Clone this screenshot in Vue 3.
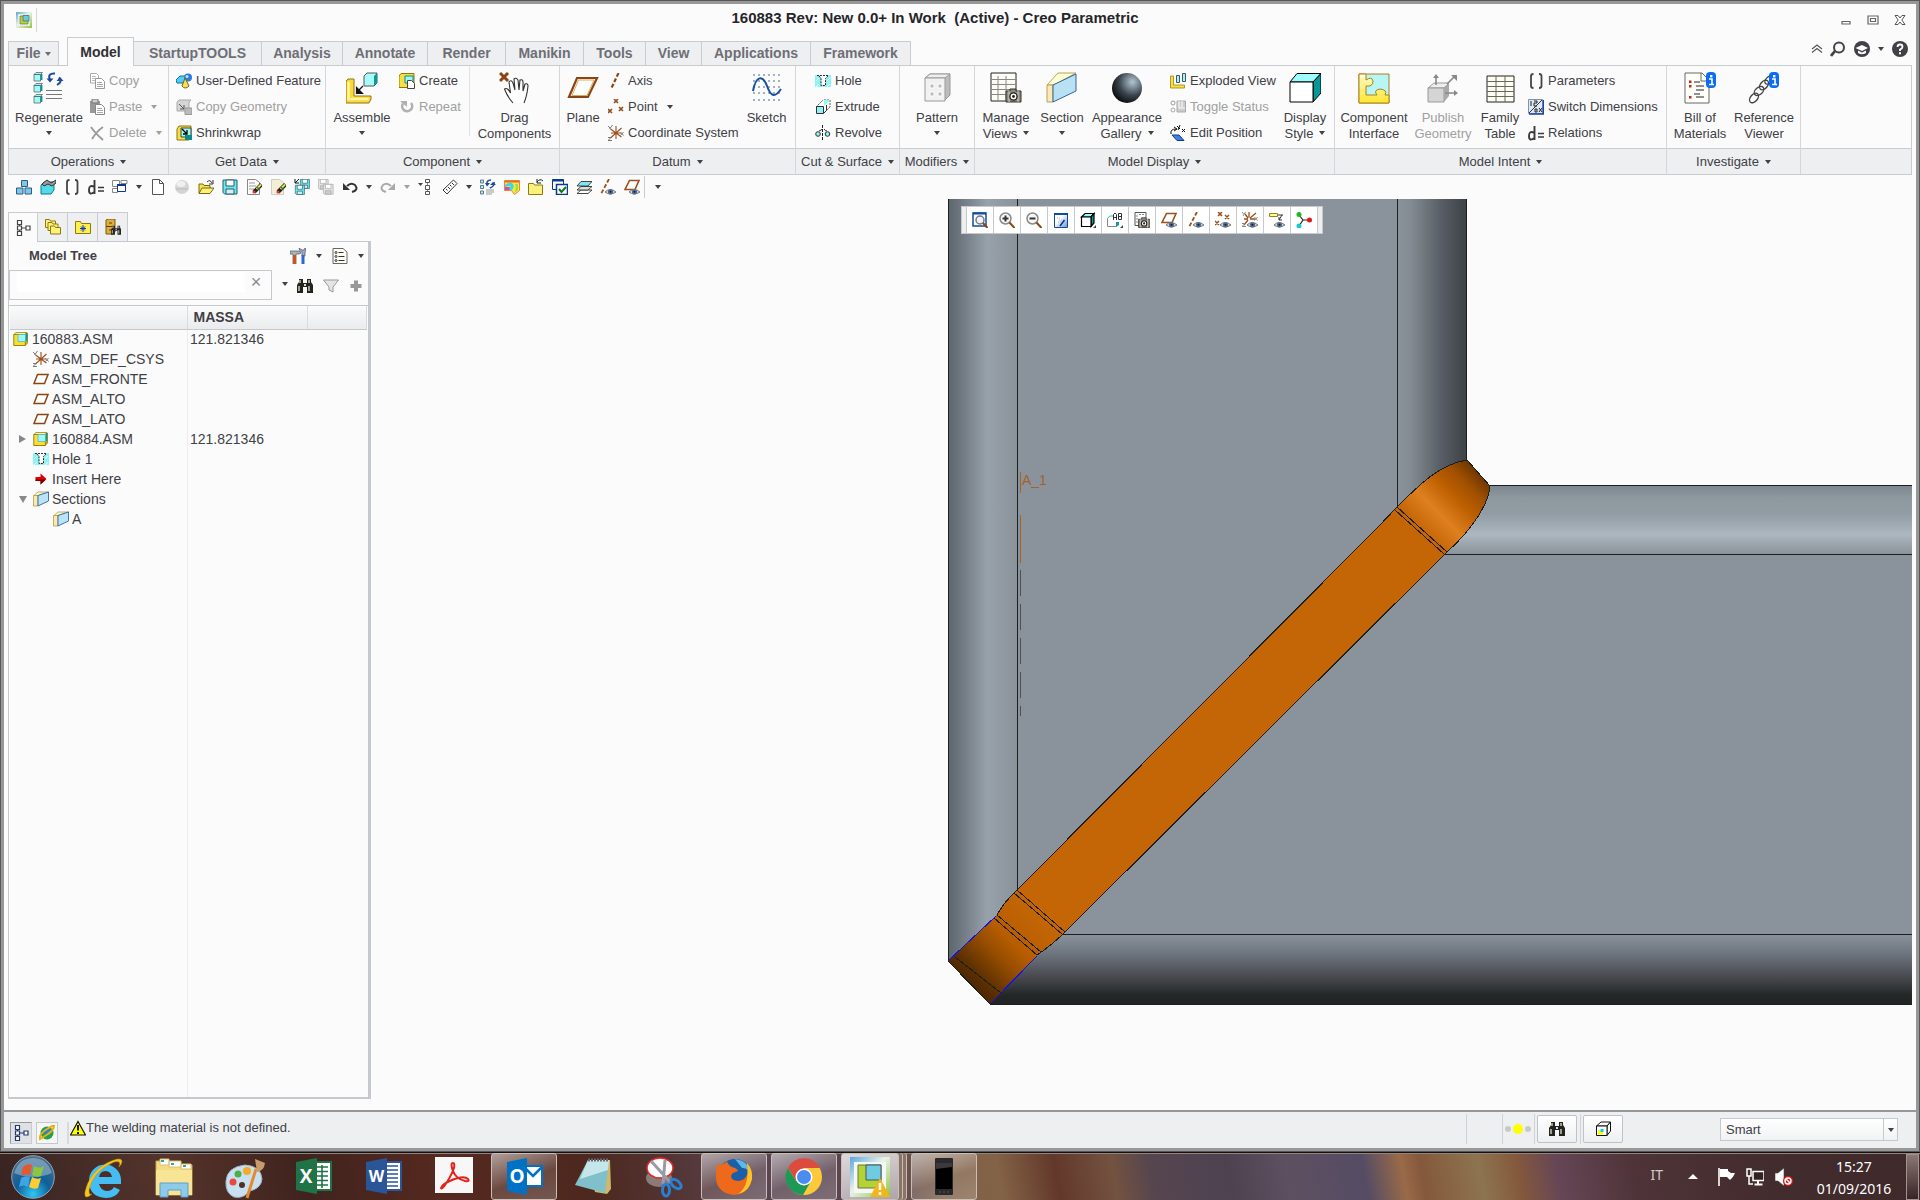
<script setup>
import { h, ref } from 'vue'

const search = ref('')
const filter = ref('Smart')

const eye = '<path d="M5 13Q10 8 16 13Q10 17 5 13Z" fill="#ddd6c4" stroke="#777"/><circle cx="10.5" cy="12.8" r="2.6" fill="#4a6f9f"/><circle cx="10.5" cy="12.8" r="1" fill="#182030"/>'
const cam = (x, y) => `<g transform="translate(${x} ${y})"><path d="M0 3h4V1h6v2h5v11H0z" fill="#8d8a7c" stroke="#333"/><path d="M3 3v11M12 3v11" stroke="#d6d3c4"/><circle cx="7.5" cy="8.5" r="3.6" fill="#fff" stroke="#222" stroke-width="1.4"/><circle cx="7.5" cy="8.5" r="1.4" fill="#222"/></g>`
const info = (x) => `<rect x="${x}" y="0" width="10" height="16" rx="4" fill="#0a6cf5"/><path d="M${x + 3} 7h3v5M${x + 3} 12.500h5" stroke="#fff" stroke-width="1.600" fill="none"/><rect x="${x + 4}" y="3" width="2.400" height="2.400" fill="#fff"/>`
const planePath = '<path d="M4.500 3.500H15L11.500 12.500H1z" fill="#fff" stroke="#8b4513" stroke-width="1.500"/>'
const section16 = '<path d="M1 4.500 5 1H15.500L5 4.500z" fill="#ffffcc" stroke="#b39b50" stroke-width=".8"/><path d="M.5 4.500H5V15H.5z" fill="#fbeab0" stroke="#b39b50" stroke-width=".8"/><path d="M5 4.500 15.500 1V10L5 15z" fill="#b8e4f5" stroke="#35649a" stroke-width=".9"/>'
const asm = '<path d="M.8 3.500 3 1.500H14L12 3.500z" fill="#fff3a0" stroke="#a08010" stroke-width=".8"/><path d="M.8 3.500h11.500v11H.8z" fill="#f7e036" stroke="#a08010"/><path d="M12.300 14.500l2.200-2.500V2z" fill="#e0b818" stroke="#a08010" stroke-width=".8"/><path d="M5 3.500h7.500v7H5z" fill="#9ff7fa" stroke="#5bb" stroke-width=".8"/><path d="M13.500 2v8" stroke="#0a9a9a" stroke-width="1.500"/>'
const csys = '<path d="M8 1v13M2.500 4l11 8M13.500 3l-11 10M3 8h10" stroke="#9a4f1c" stroke-width="1.100"/><path d="M0 1l2.500 2.500M4.500 0 1.500 4M12.500 7l3 3.500M15.500 7l-3 3.500M0 12.500h3l-3 3h4" stroke="#777" fill="none"/>'
const hole = '<path d="M0 2h4l2 3v8h5V5l2-3h3v12H0z" fill="#8af4f7"/><path d="M1 14 4 11M12 14l3-3M1 8l3-3M12 8l3-3" stroke="#fff"/><path d="M2 2.500h12" stroke="#333" stroke-dasharray="2 1"/><path d="M4 3l2 2.500V12.500h4.500V5.500L13 3" fill="none" stroke="#222" stroke-dasharray="2 1"/>'
const binoc = '<path d="M2 1h4v4h4V1h4v3l2 3v8h-6V9H6v6H0V7l2-3z" fill="#23241f"/><path d="M3 2v3M12 2v3M2 8v5M12 8v5" stroke="#c9c9b4" stroke-width="1.500"/><path d="M7 6l2 2M9 6 7 8" stroke="#ddd"/>'
const pencil = '<path d="M15.500 5.500 8 13" stroke="#222" stroke-width="4"/><path d="M15 5.500 10.500 10" stroke="#f2e24a" stroke-width="2"/><circle cx="8" cy="13" r="1.600" fill="#e33"/><path d="M11 8l2.500 2.500" stroke="#2a8a3a" stroke-width="1.500"/>'
const floppy = (x, y, s, dim) => `<g transform="translate(${x} ${y}) scale(${s})"><path d="M.5.5h14v14H2l-1.500-1.500z" fill="${dim ? '#e4e4e4' : '#6fe6ee'}" stroke="${dim ? '#aaa' : '#23606e'}"/><path d="M3.500.5h8v6h-8z" fill="#fff" stroke="${dim ? '#aaa' : '#23606e'}"/><path d="M3.500 9.500h8v5h-8z" fill="${dim ? '#ccc' : '#d8f0f4'}" stroke="${dim ? '#aaa' : '#23606e'}"/></g>`
const treeGlyph = (c) => `<path d="M4.500 2v12M5 8h8" stroke="${c}"/><path d="M2.500.5h4v4h-4zM2.500 6h4v4h-4zM2.500 11.500h4v4h-4zM11 6h4v4h-4z" fill="#fff" stroke="${c}" stroke-width="1.200"/>`
const folder = (x, y) => `<path d="M${x} ${y}h4l1 1.500h5V${y + 8}H${x}z" fill="#fff27a" stroke="#8f7a10"/>`

const icons = {
  app: '<path d="M0 0h16v16H0z" fill="url(#appg)"/><path d="M2.500 2.500h11v11h-11z" fill="#fff" stroke="#e8e8e8"/><path d="M4 4h8v8H4z" fill="#b9d237" stroke="#6d7a3a" stroke-width=".8"/><path d="M7 3.500h6V9H7z" fill="#6fc8dc" stroke="#477" stroke-width=".8"/>',
  regen: '<g fill="#9ffafa" stroke="#666" stroke-width=".8"><path d="M1 2.500 3 .5h6.500L7.500 2.500zM1 2.500h6.500v6.500H1zM1 13.500l2-2h6.500l-2 2zM1 13.500h6.500V20H1zM1 24.500l2-2h6.500l-2 2zM1 24.500h6.500V31H1z"/></g><path d="M8.500 2v6M8.500 13v6M8.500 24v6" stroke="#069494" stroke-width="1.800"/><path d="M13 18.500h16M13 22.500h16M13 26.500h16" stroke="#777"/><path d="M17 8Q14 1 22 1.500M26 5.500q4 4-2 7.500" stroke="#1c4aa0" stroke-width="2" fill="none"/><path d="M13.500 6.500h7L17 10.500zM23.500 9h7L27 5z" fill="#1c4aa0"/>',
  copy: '<path d="M1.500.5h6l2 2V10h-8z" fill="#fff" stroke="#aaa"/><path d="M3 3.500h4M3 5.500h4M3 7.500h3" stroke="#bbb"/><path d="M6.500 5.500h6l3 3v7h-9z" fill="#fff" stroke="#999"/><path d="M8 9.500h5M8 11.500h6M8 13.500h6" stroke="#aaa"/>',
  paste: '<path d="M1 2h10v12H1z" fill="#999"/><path d="M3 0h6v4H3z" fill="#ccc" stroke="#777"/><path d="M6.500 5.500h6l3 3v7h-9z" fill="#fff" stroke="#888"/><path d="M8 9.500h5M8 11.500h6M8 13.500h6" stroke="#aaa"/>',
  del: '<path d="M2 2q4 6 12 13M14 2Q8 6 3 14" stroke="#999" stroke-width="1.800" fill="none"/>',
  udf: '<path d="M0 7 4 3h7L7 10H1z" fill="#5cf" stroke="#07788a"/><circle cx="12" cy="4.500" r="4" fill="#2c7be0"/><circle cx="11" cy="3.500" r="1.500" fill="#bfe0ff"/><path d="M9 5 13 13q-4 4-7 0z" fill="#f5e05a" stroke="#7a6510"/>',
  copygeo: '<path d="M1 3 3 1h12L13 3v9H1z" fill="#d6d6d6" stroke="#aaa"/><path d="M3 5l5 5M8 6v4H4" stroke="#555" fill="none"/><path d="M9 9h7v6.500H9z" fill="#bbb" stroke="#999"/>',
  shrink: '<path d="M1 4 3 1h12v9l-2 5H1z" fill="#f8df40" stroke="#8f7410"/><path d="M5 3h10v9H5z" fill="#9ff7f7" stroke="#222" stroke-width=".8"/><path d="M6 4l5 5M11 5v4H7" stroke="#000" stroke-width="1.300" fill="none"/><path d="M9 10h7v5H9z" fill="#0a8a8a"/>',
  assemble: '<path d="M0 9 2 7h6v17h17v3l-2 4H0z" fill="#f9d937" stroke="#927318"/><path d="M2.500 10v17h20" stroke="#fff5a0" stroke-width="2.500" fill="none"/><path d="M18 4 21 1H31V11l-3 3H18z" fill="#a9fafa" stroke="#555"/><path d="M28 4 31 1V11L28 14z" fill="#079a9a"/><path d="M17 14l-6 6M10.500 15.500v6h6z" stroke="#111" stroke-width="1.200" fill="#111"/>',
  create: '<path d="M0 3 2 .5H15V12l-2 2.500H0z" fill="#f8df40" stroke="#8f7410"/><path d="M6 3h8v7H6z" fill="#9ff7f7" stroke="#0a8a8a"/><path d="M8.500 7.500h4l3 3v5h-7z" fill="#fff" stroke="#444"/>',
  repeat: '<path d="M4 4.500A5 5 0 1 0 12 4" stroke="#b0b0b0" stroke-width="2.600" fill="none"/><path d="M1 2h7v6z" fill="#b0b0b0"/>',
  drag: '<path d="M1 1l8 8M9 1 1 9" stroke="#8b4513" stroke-width="3"/><path d="M14 31Q8 24 5.500 17q3-2 6 4L10 10q2-3 4 1l2 7-1-11q2-2 4 1l1 10 1-10q3-1 3 2l0 9 2-7q3-1 3 2-1 10-4 17z" fill="#fff"/><path d="M14 31Q8 24 5.500 17q3-2 6 4L10 10q2-3 4 1l2 7-1-11q2-2 4 1l1 10 1-10q3-1 3 2l0 9 2-7q3-1 3 2-1 10-4 17" fill="none" stroke="#333" stroke-width="1.100"/>',
  plane: '<path d="M10 6H30L21 25H2z" fill="#fff" stroke="#8b4513" stroke-width="2.200"/><path d="M11.500 8H27L20 23.500H5z" fill="none" stroke="#dba95e"/>',
  axis: '<path d="M10.500 0 3 16" stroke="#8b4513" stroke-width="2.200" stroke-dasharray="4 2"/>',
  point: '<path d="M6 0l4 4M10 0 6 4M0 10l4 4M4 10l-4 4M11 8l4 4M15 8l-4 4" stroke="#9a4f1c" stroke-width="1.700"/>',
  csys,
  sketch: '<g stroke="#9fb4c8" stroke-width="2" stroke-dasharray="2 3"><path d="M2 3h28M2 9h28M2 15h28M2 21h28M2 28h28"/></g><path d="M2 19C5 3 12 3 16 14s8 12 14 3" fill="none" stroke="#1b4f9c" stroke-width="2"/>',
  hole,
  extrude: '<path d="M9 1h6v7l-4 4M1 8 8 1" stroke="#555" fill="none" stroke-dasharray="2 1"/><path d="M9 1h6L9 7z" fill="#8fe" /><path d="M1.500 7.500h7v7h-7z" fill="#8ff3f5" stroke="#333"/><path d="M8.500 14.500l3-3V6" stroke="#333" fill="none"/>',
  revolve: '<path d="M7.500 0v16" stroke="#222" stroke-dasharray="3 1"/><circle cx="3" cy="9" r="2.300" fill="#8ff3f5" stroke="#333"/><circle cx="12.500" cy="9" r="2.300" fill="#8ff3f5" stroke="#333"/><path d="M4 6q3-1 3-2M9 4q1 2 3 2" stroke="#333" fill="none"/>',
  pattern: '<path d="M4 6 9 2h20v21l-6 6" fill="#bcbcbc" stroke="#999"/><path d="M4 6 9 2h20l-5 4z" fill="#eee" stroke="#999"/><path d="M4 6h20v23H4z" fill="#f1f1f1" stroke="#999"/><path d="M9 12h4v4H9zM17 12h4v4h-4zM9 20h4v4H9zM17 20h4v4h-4z" fill="#bbb" stroke="#fff"/>',
  views: '<path d="M1 1h25v28H1z" fill="#fdfdf6" stroke="#222"/><path d="M1 7.500h25M1 12.500h25M1 17.500h25M1 22.500h25M8 4v25M16 4v25" stroke="#888"/>' + cam(16, 16),
  section: '<path d="M1 13 12 1H30L8 13z" fill="#ffffcf" stroke="#b7a060"/><path d="M1 13H7V30H1z" fill="#fbeab0" stroke="#b7a060"/><path d="M7 13 30 2V19L7 30z" fill="#b8e1f3" stroke="#35649a"/>',
  sphere: '<circle cx="16" cy="16" r="15" fill="url(#ball)"/>',
  exploded: '<path d="M.5 3h3v9h11v3H.5z" fill="#f8df40" stroke="#a08010" stroke-width=".8"/><path d="M6.500 2.500h3v7h-3zM12.500.5h3v8h-3z" fill="#9ff7f7" stroke="#456"/>',
  toggle: '<circle cx="3" cy="4" r="2" fill="none" stroke="#999"/><circle cx="3" cy="11" r="2" fill="none" stroke="#aaa"/><path d="M7 2h8.500v11H7z" fill="#ccc" stroke="#aaa"/><path d="M9 2v7h6M12 2v6" stroke="#fff" fill="none"/>',
  editpos: '<path d="M2 10h7l5 5.500H7z" fill="#3b82e8" stroke="#123a80"/><path d="M1 9Q0 4 6 4M4 2l3 2-3 2M7 1l3 3M10 0 8 5M12 4l3 3M15 4l-3 3" stroke="#111" fill="none"/>',
  display: '<path d="M1 10 8 1.500H32L24 10z" fill="#9ffcfc" stroke="#000"/><path d="M24 10l8-8.500V21l-8 9z" fill="#069898" stroke="#000"/><path d="M1 10h23v20H1z" fill="#fff" stroke="#000"/>',
  iface: '<path d="M1 2h30v29H1z" fill="#b8f5f5" stroke="#a98120"/><path d="M1 2h7v6q6-4 7 1 0 6-7 5v9h11q-4-5 3-6 8 1 5 6h4v8H1z" fill="url(#puz)" stroke="#a98120"/>',
  publish: '<path d="M1 16 7 11H22l-5 5z" fill="#eee" stroke="#999"/><path d="M1 16h16v14H1z" fill="#d5d5d5" stroke="#999"/><path d="M17 16l5-5v13l-5 6z" fill="#aaa"/><path d="M9 13V4M20 12l7-7M18 21h10" stroke="#888" stroke-width="1.600"/><path d="M6 6l3-4 3 4zM24 3h6v6zM27 18l4 3-4 3z" fill="#888"/>',
  family: '<path d="M3 4h27v26H3z" fill="#fdfdf0" stroke="#222"/><path d="M3 9.500h27M3 14.500h27M3 19.500h27M3 24.500h27M12 4v26M21 4v26" stroke="#666"/>',
  params: '<path d="M5.500 1Q3 1 3 3v10q0 2 2.500 2M11 1q2.500 0 2.500 2v10q0 2-2.500 2" stroke="#444" stroke-width="1.800" fill="none"/>',
  switch: '<path d="M.5.5h14v14H.5z" fill="#dfe9f5" stroke="#7d94b0"/><path d="M1 15h14.500V1" stroke="#1b3fae" stroke-width="1.500" fill="none"/><path d="M1 14 14 1" stroke="#333"/><path d="M3 2v5M6 2h3v2H6v3h3M7 10h2v3H7zM11 9l3 4M14 9l-3 4" stroke="#222" fill="none"/>',
  rel: '<path d="M6.500 1v14M6.500 8Q1 5 1 11t5.500 2" stroke="#3a3a3a" stroke-width="1.900" fill="none"/><path d="M10 8.500h6M10 12h6" stroke="#3a3a3a" stroke-width="1.500"/>',
  bom: '<path d="M1 1h17l7 7v23H1z" fill="#fffffa" stroke="#666"/><path d="M17 1v8h8" fill="none" stroke="#666"/><path d="M10 10h6M12 14h8M12 18h8M12 25h8M10 22h6" stroke="#222" stroke-width="1.200"/><path d="M5 8.500h2.500V11H5zM5 13h2.500v2.500H5zM5 24h2.500v2.500H5z" fill="#d02020"/>' + info(22),
  refv: '<g fill="none" stroke="#444" stroke-width="1.400"><ellipse cx="6" cy="26" rx="5.500" ry="3.500" transform="rotate(-50 6 26)"/><ellipse cx="11" cy="19" rx="5.500" ry="3.500" transform="rotate(-40 11 19)"/><ellipse cx="16" cy="13" rx="5.500" ry="3.500" transform="rotate(-50 16 13)"/><ellipse cx="21" cy="8" rx="5" ry="3" transform="rotate(-45 21 8)"/></g>' + info(21),
  blocks: '<path d="M5.500 1.500h6v6h-6zM.5 9h6.500v6H.5zM9 9h6.500v6H9z" fill="#7fc6ea" stroke="#2c5f80"/>',
  parts: '<path d="M1 6 4 3h10v8l-3 4H1z" fill="#4fdce8" stroke="#0a7a84"/><path d="M2 5 7 1l4 3 5-3v3l-4 3-4-2-4 2z" fill="#999" stroke="#333"/>',
  windows: '<path d="M.5 1.500h7v6h-7zM.5 9.500h5v4h-5zM9 1.500h6v3H9z" fill="#fff" stroke="#888"/><path d="M5.500 5.500h8v7h-8z" fill="#fff" stroke="#0b3a8c"/><path d="M5 6h9" stroke="#0b3a8c" stroke-width="2"/>',
  newdoc: '<path d="M2.500.5h7l4 4v11h-11z" fill="#fff" stroke="#555"/><path d="M9.500.5v4h4" stroke="#555" fill="none"/>',
  ball: '<circle cx="8" cy="8" r="7" fill="#d5d5d5"/><ellipse cx="7" cy="5" rx="4.500" ry="3" fill="#f0f0f0"/><path d="M2 10h12" stroke="#bbb"/>',
  open: '<path d="M1 14V5h4l1 1.500h6V9" fill="#f8e34a" stroke="#7a6810"/><path d="M1 14.500 4 9h12l-4 5.500z" fill="#fff27a" stroke="#7a6810"/><path d="M9 3q3-3 5 1M15 1v4h-4" stroke="#333" fill="none"/>',
  save: floppy(0.5, 0.5, 1),
  editdoc: '<path d="M1.500.5h8l4 3v12h-12z" fill="#fff" stroke="#888"/><path d="M3 4h6M3 7h7M3 10h5" stroke="#999"/>' + pencil,
  editdoc2: '<path d="M1.500.5h8l4 3v12h-12z" fill="#f4efd4" stroke="#ccc"/>' + pencil,
  saves: floppy(6, 0, 0.65) + floppy(1, 6, 0.65) + '<path d="M1 0v4h4M1 4l4-4" stroke="#111" fill="none"/>',
  savedim: floppy(0, 0, 0.7, 1) + floppy(5, 5, 0.7, 1),
  undo: '<path d="M5 7Q9 3 13 6q4 5-3 7" stroke="#333" stroke-width="2" fill="none"/><path d="M1 4v7h7z" fill="#333"/>',
  redo: '<path d="M11 7Q7 3 3 6q-4 5 3 7" stroke="#aaa" stroke-width="2" fill="none"/><path d="M15 4v7H8z" fill="#aaa"/>',
  hier: '<path d="M0 4h5L2.500 7z" fill="#444"/><path d="M9.500 1v14" stroke="#888"/><path d="M7.500.5h4v3h-4zM7.500 6.500h4v4h-4zM7.500 12.500h4v3h-4z" fill="#fff" stroke="#555"/>',
  ruler: '<path d="M11.500 1 15 4.500 5 15 1 11z" fill="#fff" stroke="#333"/><path d="M10 4l2 2M8 6l1.500 1.500M6 8l2 2M4 10l1.500 1.500" stroke="#333"/>',
  regen16: '<path d="M.5 1h3v3h-3zM.5 6.500h3v3h-3zM.5 12h3v3h-3z" fill="#9ff7f7" stroke="#678"/><path d="M6 11h8M6 13h8M6 15h6" stroke="#999"/><path d="M7 6Q6 1 11 1M14 3q1 4-4 6" stroke="#1c4aa0" stroke-width="1.500" fill="none"/><path d="M5 4h5L7 7.500zM10 6h6l-3-3z" fill="#1c4aa0"/>',
  rainbow: '<path d="M.5 1.500h15v10l-5 4-3-4h-7z" fill="#ffe93a" stroke="#e8862c"/><path d="M1 8V6q5-4 8-1 2 3-1 6H5q3-4 0-4z" fill="#38dce0"/><path d="M1 8h4q2 0 0 3H1z" fill="#c44ae0"/><path d="M11 5q2 4-1 9l4-3V5z" fill="#9be04a"/><path d="M1 2h14v1.500H1z" fill="#f2603c"/>',
  foldup: '<path d="M.5 4.500h5l1 1.500h8v9.500H.5z" fill="#fbf07a" stroke="#8f7a10"/><path d="M9 3q3-4 6-1M9 0v4h4" stroke="#222" fill="none"/>',
  check: '<path d="M.5.5h11v10H.5z" fill="#fff" stroke="#0b3a8c"/><path d="M1 1.500h11" stroke="#0b3a8c" stroke-width="2"/><path d="M4.500 5.500h11v10h-11z" fill="#fff" stroke="#0b3a8c" stroke-width="1.500"/><path d="M7 10l2.500 3L14 8" stroke="#0a7a1a" stroke-width="2" fill="none"/>',
  layers: '<g stroke="#333" stroke-width=".9"><path d="M1 14.500 5 11h11l-4 3.500z" fill="#fff"/><path d="M1 11 5 7.500h11L12 11z" fill="#ddd"/><path d="M1 7 5 2.500h11L12 7z" fill="#7de8ef"/></g>',
  axiseye: '<path d="M9 0 1 15" stroke="#9a4f1c" stroke-width="1.800" stroke-dasharray="4 2"/>' + eye,
  planeeye: '<path d="M5.500 1.500h9.500L11 10.500H1z" fill="#fff" stroke="#9a4f1c" stroke-width="1.600"/>' + eye,
  pointeye: '<path d="M3 0l4 4M7 0 3 4M10 3l4 4M14 3l-4 4M0 9l4 4M4 9l-4 4" stroke="#9a4f1c" stroke-width="1.500"/>' + eye,
  csyseye: '<path d="M7 5.500V0M8 6l6-5M8 7h5M6 7H2M6 6 3 2M6 8l-4 5" stroke="#9a4f1c" stroke-width="1.300"/><path d="M0 0l1.500 2M3.500 0 1 4M12.500 5l3 3.500M15.500 5l-3 3.500M0 11.500h3l-3 3h4" stroke="#888" fill="none"/>' + eye,
  annoeye: '<path d="M.5 1.500h8v3h-8z" fill="#fff99a" stroke="#8f8420"/><path d="M9 3h5M13 3l-3 5M10 5v3h3" stroke="#333" fill="none"/>' + eye,
  refit: '<path d="M1 1h13v13H1z" fill="#fff" stroke="#0f4c9c" stroke-width="1.500"/><path d="M1 1.500h13" stroke="#0f4c9c" stroke-width="2"/><circle cx="8" cy="8" r="4" fill="#eef4fa" stroke="#777" stroke-width="1.500"/><path d="M11 11l4.500 5" stroke="#8b4513" stroke-width="2"/>',
  zoomin: '<circle cx="6.500" cy="6.500" r="5.500" fill="#f8f8f8" stroke="#888" stroke-width="1.500"/><path d="M6.500 3.500v6M3.500 6.500h6" stroke="#333" stroke-width="2"/><path d="M10.500 10.500l5 5.500" stroke="#8b4513" stroke-width="2"/>',
  zoomout: '<circle cx="6.500" cy="6.500" r="5.500" fill="#f8f8f8" stroke="#888" stroke-width="1.500"/><path d="M3.500 6.500h6" stroke="#333" stroke-width="2"/><path d="M10.500 10.500l5 5.500" stroke="#8b4513" stroke-width="2"/>',
  repaint: '<path d="M1.500 1.500h13v14h-13z" fill="url(#rp)" stroke="#0f4c9c"/><path d="M1 2h14" stroke="#0f4c9c" stroke-width="2"/><path d="M11.500 8 7 14" stroke="#12308a" stroke-width="1.500"/><path d="M4 6h3M6 8h4M5 10h3" stroke="#9bb8dd" stroke-dasharray="1 1"/>',
  cube: '<path d="M1.500 5 5 1.500H14L11 5z" fill="#8ff" stroke="#000" stroke-width="1.200"/><path d="M11 5l3-3.500V11l-3 3.500z" fill="#0a9a9a" stroke="#000" stroke-width="1.200"/><path d="M1.500 5H11v9.500H1.500z" fill="#fff" stroke="#000" stroke-width="1.200"/><path d="M16 13v3h-3z" fill="#444"/>',
  savedview: '<path d="M.5 6.500 3 4h3M.5 6.500v8h9v-3" fill="#fff" stroke="#888"/><path d="M1 5.500l2-2h3" stroke="#6ee" fill="none"/><path d="M9 10h3v3l-3 2z" fill="#0a9a9a"/><path d="M6.500 8V2.500L8 1l1.500 1.500V8M6.500 5.500h3M11.500 1.500V7.500h3V1.500zM12 4.500h3" stroke="#333" fill="none"/><path d="M16 13v3h-3z" fill="#444"/>',
  viewcam: '<path d="M1 .5h11v13H1z" fill="#fff" stroke="#555"/><path d="M3 3v9M5 2.500h6" stroke="#888" stroke-dasharray="2 1"/><g transform="translate(4.500 5) scale(.75)">' + cam(0, 0) + '</g>',
  spin: '<path d="M3 3l4 5-4 6M7 8h6" stroke="#222" stroke-width="1.200" fill="none"/><circle cx="3" cy="2.500" r="2.500" fill="#1cb81c"/><circle cx="13.500" cy="8" r="2.500" fill="#e01818"/><circle cx="3" cy="14" r="2.500" fill="#1cc6d8"/>',
  tree: treeGlyph('#444'),
  treeblue: treeGlyph('#223a70'),
  folders: folder(0.5, 0.5) + folder(3, 3.5) + folder(5.5, 7),
  favs: '<path d="M.5 2.500h5l1 2h9v10H.5z" fill="#fff04a" stroke="#8f7a10"/><path d="M8 6v7M5 9.500h6M6 7.500l4 4M10 7.500l-4 4" stroke="#1133cc"/>',
  cabinet: '<path d="M1 1 3 0h7v13l-2 2H1z" fill="#dcae3c" stroke="#7a5a10"/><path d="M1 7.500h9M4 4h3M4 11h2" stroke="#5a4208"/><g transform="translate(6 6) scale(.65)">' + binoc + '</g>',
  tools: '<path d="M0 3h9l2 2-2 1H6v10H3V6H0z" fill="#a9b5b9" stroke="#456" stroke-width=".7"/><path d="M3 7h3v9H3z" fill="#d35312"/><path d="M9 0q0 3 3 4v4h3V4q2-2 0-4l-1 2h-2z" fill="#aab" stroke="#456" stroke-width=".7"/><path d="M11.500 7h3v9h-3z" fill="#2a66d8"/>',
  list: '<path d="M1 .5h10l4 3.500v11.500H1z" fill="#fffff6" stroke="#666"/><circle cx="4" cy="4.500" r="1" fill="none" stroke="#333"/><circle cx="4" cy="8.500" r="1" fill="none" stroke="#333"/><circle cx="4" cy="12.500" r="1" fill="none" stroke="#333"/><path d="M6.500 4.500h5M6.500 8.500h6M6.500 12.500h6" stroke="#333"/>',
  binoc,
  funnel: '<path d="M.5 2h15L10 9v5l-4-2V9z" fill="#e5e5e5" stroke="#999"/>',
  plus: '<path d="M6 2.500h4V6h3.500v4H10v3.500H6V10H2.500V6H6z" fill="#999"/>',
  asm, section16,
  plane16: planePath,
  insert: '<path d="M2.500 6h5V2.500L13.500 8 7.500 13.500V10h-5z" fill="#e00000"/><path d="M2.500 8.500h10.500L7.500 13.500V10h-5z" fill="#7a0000"/>',
  collapse: '<path d="M3 8 8 4l5 4M3 11.500 8 7.500l5 4" stroke="#555" fill="none" stroke-width="1.200"/>',
  find: '<circle cx="9" cy="6.500" r="5" fill="#f4faff" stroke="#444" stroke-width="2"/><path d="M5 10l-4 5" stroke="#444" stroke-width="2.800"/>',
  learn: '<circle cx="8" cy="8" r="8" fill="#3f4145"/><path d="M1.500 7 8 4l6 3-6 3z" fill="#fff"/><path d="M4 9.500v2.500q4 2.500 8 0V9.500L8 11.500z" fill="#fff"/>',
  help: '<circle cx="8" cy="8" r="8" fill="#3f4145"/><path d="M5.500 6Q5.500 3.500 8 3.500t2.500 2.200Q10.500 7.500 8 8.500v1.500" stroke="#fff" stroke-width="1.800" fill="none"/><path d="M7 11.200h2v2H7z" fill="#fff"/>',
  min: '<path d="M4 9.500h8v2.500H4z" fill="#fff" stroke="#666" stroke-width="1.200"/>',
  max: '<path d="M3 4h10v8H3zM5.500 6.500h5v3h-5z" fill="#fff" stroke="#666" stroke-width="1.200"/>',
  close: '<path d="M3 3.500h3L8 6l2-2.500h3L9.800 8 13 12.500h-3L8 10l-2 2.500H3L6.200 8z" fill="#fff" stroke="#555"/>',
  globe: '<circle cx="8" cy="8" r="6.500" fill="#22a04a"/><path d="M4 5q5-4 8 0-1 5-6 4z" fill="#2a7fe0"/><path d="M1 14Q0 9 8 4t7-3q0 4-6 8t-8 5z" fill="none" stroke="#e8b010" stroke-width="2"/>',
  warn: '<path d="M8 1.500 15.500 15H.5z" fill="#ff0" stroke="#111" stroke-width="1.200"/><path d="M8 5v5.500M8 12v2" stroke="#111" stroke-width="2"/>',
  box: '<path d="M1.500 5 6 1h9.500L12 5z" fill="#fff" stroke="#111"/><path d="M12 5l3.500-4V10L12 14.500z" fill="#fff" stroke="#111"/><path d="M1.500 5H12v9.500H1.500z" fill="#fff" stroke="#111"/><path d="M3 9h5v4.500H3z" fill="#ff0"/><path d="M5.500 8h3v3h-3z" fill="#0cf"/>',
  flag: '<path d="M2 0v18" stroke="#fff" stroke-width="1.600"/><path d="M3 1h8v2l3 2h4q-2 5-5 7l-3-3H3z" fill="#fff"/>',
  net: '<path d="M1 1h4v7H1zM3 8v8h4" stroke="#fff" stroke-width="1.500" fill="none"/><path d="M7 3.500h11v9H7z" fill="#332224" stroke="#fff" stroke-width="1.500"/><path d="M12 13v3M8.500 16.500h8" stroke="#fff" stroke-width="2"/>',
  speaker: '<path d="M0 5h3l6-5v18l-6-5H0z" fill="#fff" stroke="#444" stroke-width=".6"/><circle cx="13" cy="13" r="5" fill="#e01414"/><circle cx="13" cy="13" r="3" fill="none" stroke="#fff" stroke-width="1.400"/><path d="M11 11l4 4" stroke="#fff" stroke-width="1.400"/>',
  start: '<circle cx="22" cy="22" r="21.300" fill="url(#orb)" stroke="#8fa4b8"/><path d="M3 18Q8 3 22 3t19 15Q22 26 3 18z" fill="#b9d1e2" opacity=".45"/><path d="M12 12q5-4 9-2l-2 10q-5-2-9 1z" fill="#e8562a"/><path d="M23 11q5 3 10 0l-3 10q-5 2-9-1z" fill="#8cc63e"/><path d="M10 23q4-3 9-1l-2 10q-5-3-9 0z" fill="#3fa3e6"/><path d="M21 22q5 3 9 1l-3 10q-4 2-9-1z" fill="#fccc33"/>',
  ie: '<path d="M6 24A16 16 0 0 1 38 23V27H16q2 7 8 7 5 0 7-4l6 3q-4 8-14 8Q6 40 6 24zM16 20h13q-1-6-6.500-6T16 20z" fill="#45bdf2"/><path d="M9 37Q1 44 2 35 6 16 24 6q14-7 15-2 0 3-3 6 3-7-5-5Q10 14 6 33q0 6 3 4z" fill="#f6c51e" stroke="#c8960c" stroke-width=".5"/>',
  explorer: '<path d="M3 4h12l2 4h22v30H3z" fill="#f3dc83" stroke="#c6a748"/><path d="M7 2h9v6H7zM16 4h12v6H16zM28 7h10v5H28z" fill="#fff" stroke="#d9c070"/><path d="M8 4h3M18 7h3M30 9h3" stroke="#3a9" stroke-width="2"/><path d="M3 13h36v25H3z" fill="#f7e595"/><path d="M7 26h28v14h-7v-7H15v7H7z" fill="#8ecbea" stroke="#5f9fc8"/>',
  paint: '<path d="M3 24Q4 10 22 8q16 1 17 14-1 10-13 12-5 8-15 6Q2 36 3 24z" fill="#c9e0f0" stroke="#9ab5c8"/><circle cx="10" cy="25" r="3.500" fill="#e74a3a"/><circle cx="15" cy="17" r="3.500" fill="#4cae4c"/><circle cx="24" cy="14" r="4" fill="#f7a928"/><circle cx="19" cy="28" r="3" fill="#503028"/><path d="M33 12 24 41" stroke="#e58a2a" stroke-width="3"/><path d="M32 2l10 4q-1 8-8 9z" fill="#c99a6a"/>',
  excel: '<path d="M21 5h17v28H21z" fill="#fff" stroke="#207346" stroke-width="2"/><path d="M23 10h12M23 14.500h12M23 19h12M23 23.500h12M23 28h12M29 8v23" stroke="#207346" stroke-width="1.600"/><path d="M3 5 24 1v36L3 33z" fill="#207346"/><text x="13" y="26" text-anchor="middle" font-family="Open Sans, sans-serif" font-weight="700" font-size="19" fill="#fff">X</text>',
  word: '<path d="M21 5h17v28H21z" fill="#fff" stroke="#2a5699" stroke-width="2"/><path d="M23 9h12M23 13h12M23 17h12M23 21h12M23 25h12M23 29h12" stroke="#2a5699" stroke-width="1.600"/><path d="M3 5 24 1v36L3 33z" fill="#2a5699"/><text x="13.500" y="25" text-anchor="middle" font-family="Open Sans, sans-serif" font-weight="700" font-size="16" fill="#fff">W</text>',
  acrobat: '<path d="M2 0h38v36H2z" fill="#f7f7f7"/><path d="M20 6q-3 0 0 8 3 8 12 10 5 1 3-2-4-4-16 1-10 4-11 8 1 2 6-6t7-14q1-5-1-5z" fill="none" stroke="#e2241c" stroke-width="2"/>',
  outlook: '<path d="M22 9h17v20H22z" fill="#fff" stroke="#0072c6" stroke-width="2"/><path d="M22 11l8 8 9-9" fill="none" stroke="#0072c6" stroke-width="2.500"/><path d="M4 5 24 1v37L4 34z" fill="#0072c6"/><text x="14" y="26" text-anchor="middle" font-family="Open Sans, sans-serif" font-weight="700" font-size="19" fill="#fff">O</text>',
  notepad: '<path d="M16 3h21l1 29-4 5-12-2z" fill="#cdb96a"/><path d="M15 3h21l-4 33L2 28z" fill="#7fc0ca"/><path d="M15 3h21l-1 10L7 22z" fill="#c5e6ea"/><path d="M15 3h21" stroke="#667" stroke-width="3" stroke-dasharray="2 1"/>',
  snip: '<ellipse cx="16" cy="21" rx="13" ry="9" fill="#8a7a78"/><ellipse cx="17" cy="11" rx="13" ry="10" fill="#fff" stroke="#dd2a2a" stroke-width="1.500"/><path d="M8 4l20 22M22 3l-2 24" stroke="#99a" stroke-width="3"/><ellipse cx="23" cy="33" rx="3.500" ry="6" fill="none" stroke="#2b7fd0" stroke-width="3"/><ellipse cx="33" cy="27" rx="6" ry="3.500" transform="rotate(40 33 27)" fill="none" stroke="#2b7fd0" stroke-width="3"/>',
  firefox: '<circle cx="22" cy="19" r="17" fill="#1c5fa8"/><path d="M22 2q15 2 16 17-3-9-9-8z" fill="#5cb8e8"/><path d="M4 8q0-2 3 0 5-1 7-4 1 4 5 6 5 1 6 4l-5 2q-3 2-1 6 6 4 12 0 6-5 3-16 6 6 5 16-3 15-18 16Q4 36 3 21q0-8 1-13z" fill="#ee6a1a"/><path d="M34 6q6 7 5 16-3 13-14 15 12-8 9-31z" fill="#fbc52a"/>',
  chrome: '<circle cx="21" cy="20" r="18" fill="#fbc93a"/><path d="M5 11A18 18 0 0 1 37 11H21L13 24z" fill="#dd4b3e"/><path d="M5 11A18 18 0 0 0 20 38l8-14H13z" fill="#1c9a55"/><circle cx="21" cy="20" r="8.500" fill="#fff"/><circle cx="21" cy="20" r="7" fill="#4a8cf0"/>',
  creo: '<path d="M1 0h40v40H1z" fill="url(#appg)"/><path d="M5 5h32v31H5z" fill="#f6f6f6"/><path d="M9 8h23v23H9z" fill="#b2d235" stroke="#667a30"/><path d="M17 8h15v15H17z" fill="#6fcbe0" stroke="#456"/><path d="M31 21 41 40H21z" fill="#f4b51c"/><path d="M31 26v7M31 35v3" stroke="#fff" stroke-width="2.500"/>',
  phone: '<rect x="12" y="1" width="18" height="37" rx="1" fill="#2a2a2c"/><path d="M13 6h16v26H13z" fill="#000"/><path d="M13 6h16v4L13 12z" fill="#3a3a3c"/><path d="M16 35h10" stroke="#555" stroke-dasharray="2 2"/>',
}

const Ico = (p) => h('svg', {
  viewBox: `0 0 ${p.s} ${p.s}`, width: p.s, height: p.s, 'aria-hidden': 'true', innerHTML: icons[p.n],
})
Ico.props = { n: String, s: { type: Number, default: 16 } }

const tabs = [
  { t: 'StartupTOOLS', w: 128 }, { t: 'Analysis', w: 81 }, { t: 'Annotate', w: 85 }, { t: 'Render', w: 78 },
  { t: 'Manikin', w: 78 }, { t: 'Tools', w: 62 }, { t: 'View', w: 56 }, { t: 'Applications', w: 109 }, { t: 'Framework', w: 100 },
]

const big = (w, n, l, drop, off) => ({ kind: 'big', w, n, l, drop, off })
const col = (w, pad, ...rows) => ({ kind: 'col', w, pad, rows })
const row = (n, t, off, drop) => ({ n, t, off, drop })
const groups = [
  { t: 'Operations', w: 160, items: [big(80, 'regen', ['Regenerate'], 1), col(79, 0, row('copy', 'Copy', 1), row('paste', 'Paste', 1, 1), row('del', 'Delete', 1, 1))] },
  { t: 'Get Data', w: 157, items: [col(156, 7, row('udf', 'User-Defined Feature'), row('copygeo', 'Copy Geometry', 1), row('shrink', 'Shrinkwrap'))] },
  { t: 'Component', w: 234, items: [big(72, 'assemble', ['Assemble'], 1), col(71, 1, row('create', 'Create'), row('repeat', 'Repeat', 1)), { kind: 'sep' }, big(89, 'drag', ['Drag', 'Components'])] },
  { t: 'Datum', w: 236, items: [big(46, 'plane', ['Plane']), col(132, 2, row('axis', 'Axis'), row('point', 'Point', 0, 1), row('csys', 'Coordinate System')), big(57, 'sketch', ['Sketch'])] },
  { t: 'Cut & Surface', w: 104, items: [col(103, 19, row('hole', 'Hole'), row('extrude', 'Extrude'), row('revolve', 'Revolve'))] },
  { t: 'Modifiers', w: 75, items: [big(74, 'pattern', ['Pattern'], 1)] },
  { t: 'Model Display', w: 360, items: [big(62, 'views', ['Manage', 'Views'], 2), big(50, 'section', ['Section'], 1), big(80, 'sphere', ['Appearance', 'Gallery'], 2), col(109, 3, row('exploded', 'Exploded View'), row('toggle', 'Toggle Status', 1), row('editpos', 'Edit Position')), big(58, 'display', ['Display', 'Style'], 2)] },
  { t: 'Model Intent', w: 332, items: [big(78, 'iface', ['Component', 'Interface']), big(60, 'publish', ['Publish', 'Geometry'], 0, 1), big(54, 'family', ['Family', 'Table']), col(139, 1, row('params', 'Parameters'), row('switch', 'Switch Dimensions'), row('rel', 'Relations'))] },
  { t: 'Investigate', w: 134, items: [big(66, 'bom', ['Bill of', 'Materials']), big(62, 'refv', ['Reference', 'Viewer'])] },
]

const quick = ['blocks', 'parts', 'params', 'rel', 'windows', '', 'newdoc', 'ball', 'open', 'save', 'editdoc', 'editdoc2', 'saves', 'savedim', 'undo', '', 'redo', '-', 'hier', 'ruler', '', 'regen16', 'rainbow', 'foldup', 'check', 'layers', 'axiseye', 'planeeye']
const viewTools = ['refit', 'zoomin', 'zoomout', 'repaint', 'cube', 'savedview', 'viewcam', 'planeeye', 'axiseye', 'pointeye', 'csyseye', 'annoeye', 'spin']

const tree = [
  { n: 'asm', t: '160883.ASM', m: '121.821346', lv: 0 },
  { n: 'csys', t: 'ASM_DEF_CSYS', lv: 1 },
  { n: 'plane16', t: 'ASM_FRONTE', lv: 1 },
  { n: 'plane16', t: 'ASM_ALTO', lv: 1 },
  { n: 'plane16', t: 'ASM_LATO', lv: 1 },
  { n: 'asm', t: '160884.ASM', m: '121.821346', lv: 1, x: 'shut' },
  { n: 'hole', t: 'Hole 1', lv: 1 },
  { n: 'insert', t: 'Insert Here', lv: 1 },
  { n: 'section16', t: 'Sections', lv: 1, x: 'open' },
  { n: 'section16', t: 'A', lv: 2 },
]

const apps = [
  { n: 'ie' }, { n: 'explorer' }, { n: 'paint' }, { n: 'excel' }, { n: 'word' }, { n: 'acrobat' }, { n: 'outlook', run: 1 },
  { n: 'notepad' }, { n: 'snip' }, { n: 'firefox', run: 1 }, { n: 'chrome', run: 1 }, { n: 'creo', run: 1, active: 1 }, { n: 'phone', run: 1 },
]
</script>

<template>
  <div class="desktop">
    <svg class="defs" aria-hidden="true">
      <defs>
        <linearGradient id="appg" x1="0" y1="0" x2="1" y2="1"><stop offset="0" stop-color="#5aa7e0" /><stop offset=".45" stop-color="#e8f2e8" /><stop offset="1" stop-color="#8cc63e" /></linearGradient>
        <radialGradient id="ball" cx=".68" cy=".3" r=".75"><stop offset="0" stop-color="#b4c3cf" /><stop offset=".25" stop-color="#7f909d" /><stop offset=".6" stop-color="#3a434b" /><stop offset="1" stop-color="#0c0e10" /></radialGradient>
        <linearGradient id="puz" x1="0" y1="0" x2="0" y2="1"><stop offset="0" stop-color="#fffbd0" /><stop offset="1" stop-color="#ffe62e" /></linearGradient>
        <linearGradient id="rp" x1="0" y1="0" x2="1" y2="1"><stop offset=".4" stop-color="#fff" /><stop offset="1" stop-color="#5f8fd6" /></linearGradient>
        <radialGradient id="orb" cx=".5" cy=".9" r=".9"><stop offset="0" stop-color="#2fc8f5" /><stop offset=".45" stop-color="#0f5f98" /><stop offset="1" stop-color="#4f6f8a" /></radialGradient>
      </defs>
    </svg>

    <div class="window">
      <header class="title">
        <div class="title-left"><Ico n="app" /></div>
        <h1>160883 Rev: New 0.0+ In Work&nbsp; (Active) - Creo Parametric</h1>
        <div class="title-right">
          <button aria-label="Minimize"><Ico n="min" /></button>
          <button aria-label="Maximize"><Ico n="max" /></button>
          <button aria-label="Close"><Ico n="close" /></button>
        </div>
      </header>

      <nav class="tabs">
        <button class="tab file">File<i class="caret"></i></button>
        <button class="tab active">Model</button>
        <button v-for="t in tabs" :key="t.t" class="tab" :style="{ width: t.w + 'px' }">{{ t.t }}</button>
        <div class="help">
          <button aria-label="Collapse ribbon"><Ico n="collapse" /></button>
          <button aria-label="Search"><Ico n="find" /></button>
          <button aria-label="Learning"><Ico n="learn" /></button>
          <i class="caret"></i>
          <button aria-label="Help"><Ico n="help" /></button>
        </div>
      </nav>

      <section class="ribbon">
        <div v-for="g in groups" :key="g.t" class="group" :style="{ width: g.w + 'px' }">
          <div class="items">
            <template v-for="(it, i) in g.items" :key="i">
              <button v-if="it.kind === 'big'" class="big" :class="{ off: it.off }" :style="{ width: it.w + 'px' }">
                <Ico :n="it.n" :s="32" />
                <span v-for="(l, k) in it.l" :key="l" class="line">{{ l }}<i v-if="it.drop === 2 && k === 1" class="caret"></i></span>
                <i v-if="it.drop === 1" class="caret below"></i>
              </button>
              <div v-else-if="it.kind === 'col'" class="col" :style="{ width: it.w + 'px', paddingLeft: it.pad + 'px' }">
                <button v-for="r in it.rows" :key="r.t" class="small" :class="{ off: r.off }">
                  <Ico :n="r.n" />{{ r.t }}<i v-if="r.drop" class="caret"></i>
                </button>
              </div>
              <div v-else class="sep"></div>
            </template>
          </div>
          <button class="label">{{ g.t }}<i class="caret"></i></button>
        </div>
        <div class="group rest"><div class="items"></div><div class="label"></div></div>
      </section>

      <div class="quick">
        <template v-for="(q, i) in quick" :key="i">
          <button v-if="q.length > 1" :aria-label="q"><Ico :n="q" /></button>
          <span v-else class="drop" :class="{ off: q === '-' }"><i class="caret"></i></span>
        </template>
        <span class="drop last"><i class="caret"></i></span>
      </div>

      <main class="work">
        <aside class="side">
          <div class="side-tabs">
            <button class="on" aria-label="Model tree"><Ico n="tree" /></button>
            <button aria-label="Folders"><Ico n="folders" /></button>
            <button aria-label="Favorites"><Ico n="favs" /></button>
            <button aria-label="Search folders"><Ico n="cabinet" /></button>
          </div>
          <div class="panel">
            <div class="panel-head">
              <h2>Model Tree</h2>
              <button aria-label="Settings"><Ico n="tools" /></button><i class="caret"></i>
              <button aria-label="Show"><Ico n="list" /></button><i class="caret"></i>
            </div>
            <div class="panel-search">
              <div class="box">
                <input v-model="search" type="text" aria-label="Search tree">
                <button class="clear" aria-label="Clear">×</button>
              </div>
              <i class="caret"></i>
              <button aria-label="Find"><Ico n="binoc" /></button>
              <button aria-label="Filter"><Ico n="funnel" /></button>
              <button aria-label="Add"><Ico n="plus" /></button>
            </div>
            <div class="tree">
              <table>
                <thead><tr><th class="c1"></th><th class="c2">MASSA</th><th></th></tr></thead>
                <tbody>
                  <tr v-for="r in tree" :key="r.t">
                    <td><span class="node" :class="'lv' + r.lv"><i v-if="r.x" class="tw" :class="r.x"></i><Ico :n="r.n" />{{ r.t }}</span></td>
                    <td>{{ r.m }}</td>
                    <td></td>
                  </tr>
                </tbody>
              </table>
            </div>
          </div>
        </aside>

        <div class="canvas">
          <svg class="scene" viewBox="371 199 1541 911" preserveAspectRatio="xMinYMin slice">
            <defs>
              <linearGradient id="tubeL"><stop offset="0" stop-color="#5b656c" /><stop offset=".3" stop-color="#7b848c" /><stop offset=".57" stop-color="#98a2aa" /><stop offset="1" stop-color="#8a929a" /></linearGradient>
              <linearGradient id="tubeR"><stop offset="0" stop-color="#8a929b" /><stop offset=".2" stop-color="#838c93" /><stop offset=".42" stop-color="#6c7479" /><stop offset=".65" stop-color="#575b64" /><stop offset="1" stop-color="#3c4245" /></linearGradient>
              <linearGradient id="tubeT" x1="0" y1="0" x2="0" y2="1"><stop offset="0" stop-color="#7c858d" /><stop offset=".18" stop-color="#8e989f" /><stop offset=".42" stop-color="#929ca4" /><stop offset=".72" stop-color="#adb7bf" /><stop offset="1" stop-color="#8a939a" /></linearGradient>
              <linearGradient id="tubeB" x1="0" y1="0" x2="0" y2="1"><stop offset="0" stop-color="#8a939b" /><stop offset=".3" stop-color="#6b727b" /><stop offset=".5" stop-color="#55575f" /><stop offset=".7" stop-color="#3b3d40" /><stop offset=".86" stop-color="#232728" /><stop offset="1" stop-color="#222" /></linearGradient>
              <linearGradient id="cap" gradientUnits="userSpaceOnUse" x1="1421" y1="530" x2="1479" y2="473"><stop offset="0" stop-color="#c46606" /><stop offset=".3" stop-color="#de7f20" /><stop offset=".58" stop-color="#be6000" /><stop offset=".8" stop-color="#a05000" /><stop offset="1" stop-color="#6e3800" /></linearGradient>
              <linearGradient id="foot" gradientUnits="userSpaceOnUse" x1="1040" y1="911" x2="969" y2="983"><stop offset="0" stop-color="#c46606" /><stop offset=".4" stop-color="#b85e00" /><stop offset=".62" stop-color="#944c00" /><stop offset=".88" stop-color="#5c3000" /><stop offset="1" stop-color="#4e2800" /></linearGradient>
            </defs>
            <g class="faces">
              <path d="M1017 199H1397V508L1017 890z" fill="#8a929b" />
              <path d="M1445 554H1912V934H1062z" fill="#8a929b" />
              <path d="M948 199H1017V900L948 962z" fill="url(#tubeL)" />
              <path d="M1397 199H1467V462L1440 500 1397 508z" fill="url(#tubeR)" />
              <path d="M1912 485H1480L1440 554H1912z" fill="url(#tubeT)" />
              <path d="M1912 934H1040L990 985V1005H1912z" fill="url(#tubeB)" />
              <path d="M1017 890 1397 507 1447 552 1065 932z" fill="#c46606" />
              <path d="M1397 507C1420 484 1440 464 1467 460L1490 486C1489 502 1474 528 1447 552z" fill="url(#cap)" />
              <path d="M1017 890Q1004 902 997 915L948 961 990 1004 1037 955Q1052 945 1065 932z" fill="url(#foot)" />
            </g>
            <g class="edges">
              <path d="M948.5 199V961M1017.500 199V890M1397.500 199V507M1466.500 199V460M1490 485.500H1912M1444 554.500H1912M1062 934.500H1912M990 1004.500H1912" />
              <path d="M1017 890 1378 527 1397 507C1420 484 1440 464 1467 460L1490 486C1489 502 1474 528 1447 552L1065 932Q1052 945 1037 955M1017 890Q1004 902 997 915M948 961 990 1004" />
              <path d="M1397 507 1447 552M1395 510 1444 554M1017 890 1065 932M1014 893 1062 934M997 915 1041 952M994 918 1037 955M955 957 1001 993" />
            </g>
            <path class="blue" d="M996 916 948 961M1037 956 990 1004" />
            <path class="axis" d="M1020.500 472V493M1020.500 515V563" />
            <path class="axis dark" d="M1020.500 570V716" />
            <text x="1022" y="485">A_1</text>
          </svg>
          <div class="view-tools">
            <button v-for="v in viewTools" :key="v" :aria-label="v"><Ico :n="v" /></button>
          </div>
        </div>
      </main>

      <footer class="status">
        <button class="sq pressed" aria-label="Toggle tree"><Ico n="treeblue" /></button>
        <button class="sq" aria-label="Toggle browser"><Ico n="globe" /></button>
        <p><Ico n="warn" />The welding material is not defined.</p>
        <div class="cell"></div>
        <div class="cell lights"><i></i><i class="lit"></i><i></i></div>
        <div class="cell"><button class="wide" aria-label="Find"><Ico n="binoc" /></button></div>
        <div class="cell"><button class="wide" aria-label="Selection"><Ico n="box" /></button></div>
        <div class="filter">
          <select v-model="filter" aria-label="Selection filter"><option>Smart</option></select>
          <i class="caret"></i>
        </div>
      </footer>
    </div>

    <div class="taskbar">
      <button class="start" aria-label="Start"><Ico n="start" :s="44" /></button>
      <div v-for="a in apps" :key="a.n" class="slot">
        <button class="app" :class="{ run: a.run, act: a.active }" :aria-label="a.n"><Ico :n="a.n" :s="42" /></button>
      </div>
      <div class="tray">
        <span class="lang">IT</span>
        <i class="up"></i>
        <Ico n="flag" :s="18" /><Ico n="net" :s="18" /><Ico n="speaker" :s="18" />
        <time><span>15:27</span><span>01/09/2016</span></time>
        <button class="peek" aria-label="Show desktop"></button>
      </div>
    </div>
  </div>
</template>

<style>
body { margin: 0; }
</style>

<style scoped>
* { box-sizing: border-box; }
.desktop { display: flex; flex-direction: column; height: 100vh; overflow: hidden; font: 13px/16px "Liberation Sans", Arial, sans-serif; color: #404046; }
.defs { position: absolute; width: 0; height: 0; }
button { display: flex; align-items: center; justify-content: center; margin: 0; padding: 0; border: 0; background: none; font: inherit; color: inherit; white-space: nowrap; }
button svg, .desktop svg { flex: none; }
h1, h2, p { margin: 0; }
.caret { display: inline-block; flex: none; width: 0; height: 0; border: solid transparent; border-width: 4px 3px 0; border-top-color: currentColor; }

.window { flex: 1; min-height: 0; display: flex; flex-direction: column; border: 1px solid #595658; box-shadow: inset 0 0 0 3px #979797; padding: 3px; background: #fbfbfb; }

.title { display: flex; height: 32px; }
.title-left { width: 40px; padding: 8px 0 0 12px; }
.title-left::after { content: ""; float: right; width: 1px; height: 24px; margin: -4px 7px 0 0; background: #d4d6d8; }
.title h1 { flex: 1; padding-top: 3px; text-align: center; font-size: 15px; line-height: 22px; font-weight: 700; color: #26262a; }
.title-right { display: flex; align-items: flex-start; justify-content: flex-end; width: 90px; padding: 8px 8px 0 0; gap: 11px; }

.tabs { display: flex; align-items: flex-end; height: 29px; padding-left: 4px; }
.tab { height: 24px; padding-bottom: 2px; border: 1px solid #c8cbcf; border-width: 1px 1px 0 0; background: #eeeff1; font-size: 14px; font-weight: 700; color: #6e6e76; }
.file { width: 51px; margin-right: 8px; border-left-width: 1px; gap: 4px; }
.tab.active { position: relative; width: 67px; height: 29px; margin-bottom: -1px; padding-bottom: 0; border-left-width: 1px; background: #fbfbfb; color: #303034; }
.tab .caret { margin-top: 3px; }
.help { display: flex; align-items: center; gap: 8px; height: 32px; margin-left: auto; padding-right: 8px; }
.help button:first-child { margin-right: -3px; }

.ribbon { display: flex; height: 110px; margin: 0 4px; border: 1px solid #c8cbcf; }
.group { display: flex; flex-direction: column; flex: none; border-right: 1px solid #d4d6d9; }
.group.rest { flex: 1; border-right: 0; }
.items { display: flex; height: 82px; }
.big { flex: none; flex-direction: column; justify-content: flex-start; padding-top: 6px; }
.big svg { margin-bottom: 6px; }
.line .caret { margin: 0 0 3px 6px; }
.below { margin-top: 5px; }
.off { color: #a0a0a0; }
.col { flex: none; padding-top: 2px; }
.small { height: 26px; gap: 4px; }
.small .caret { margin-left: 5px; }
.sep { width: 1px; height: 70px; background: #e2e3e5; }
.label { flex: 1; width: 100%; gap: 6px; border-top: 1px solid #c8cbcf; background: #eeeff1; }

.quick { display: flex; align-items: center; height: 24px; padding-left: 8px; flex: none; }
.quick button { width: 24px; height: 24px; }
.drop { display: flex; justify-content: center; width: 14px; }
.drop.last { width: 26px; height: 22px; align-items: center; border-left: 1px solid #c8cbcf; }

.work { flex: 1; min-height: 0; display: flex; padding-right: 4px; }
.side { display: flex; flex-direction: column; width: 367px; padding: 13px 0 11px 4px; }
.side-tabs { display: flex; }
.side-tabs button { width: 30px; height: 29px; border: 1px solid #c8cbcf; border-width: 1px 1px 0 0; background: #eeeff1; }
.side-tabs .on { position: relative; height: 30px; margin-bottom: -1px; border-left-width: 1px; background: #fbfbfb; }
.panel { flex: 1; display: flex; flex-direction: column; border: 1px solid #c5c9cd; border-width: 1px 3px 2px 1px; }
.panel-head { display: flex; align-items: center; height: 28px; padding-right: 4px; }
.panel-head h2 { flex: 1; padding-left: 20px; font-size: 13px; }
.panel-head button { width: 24px; }
.panel-head .caret { margin: 0 6px 0 6px; }
.panel-head .caret:last-child { margin-right: 0; }
.panel-search { display: flex; align-items: flex-start; justify-content: space-between; height: 35px; padding-right: 4px; }
.panel-search > button { margin-top: 8px; }
.panel-search > .caret { margin: 12px 0 0; }
.box { display: flex; width: 263px; height: 30px; border: 1px solid #c5c9cd; padding: 1px 4px 1px 7px; }
.box input { flex: 1; min-width: 0; height: 20px; padding: 0; border: 0; background: #fff; font: inherit; outline: 0; }
.clear { width: 22px; height: 20px; font-size: 18px; color: #888; }
.tree { flex: 1; padding: 0 1px; border-top: 1px solid #c5c9cd; background: linear-gradient(#ebecee, #ebecee) 178px 0 / 1px 100% no-repeat; }
table { width: 100%; border-collapse: collapse; table-layout: fixed; font-size: 14px; }
th { height: 23px; padding: 0 0 0 6px; border-right: 1px solid #d9dbde; border-bottom: 1px solid #c5c9cd; background: linear-gradient(#fbfbfb, #e9ebed); text-align: left; }
.c1 { width: 177px; }
.c2 { width: 120px; }
td { height: 20px; padding: 0 0 0 3px; white-space: nowrap; }
td:first-child { padding: 0; }
.node { position: relative; display: flex; align-items: center; gap: 3px; }
.lv0 { padding-left: 3px; }
.lv1 { padding-left: 23px; }
.lv2 { padding-left: 43px; }
.tw { position: absolute; left: 9px; width: 0; height: 0; border: solid transparent; }
.tw.shut { border-width: 4px 0 4px 7px; border-left-color: #888; }
.tw.open { border-width: 7px 4px 0; border-top-color: #888; }

.canvas { position: relative; flex: 1; min-width: 0; }
.scene { display: block; width: 100%; height: 100%; }
.faces, .edges, .blue, .axis { shape-rendering: crispEdges; }
.edges path { fill: none; stroke: #1c1f22; stroke-width: 1; }
.blue { fill: none; stroke: #1414e0; }
.axis { fill: none; stroke: #a3622a; }
.axis.dark { stroke: #4c5157; stroke-dasharray: 26 8; }
.scene text { font: 14px "Liberation Sans", Arial, sans-serif; fill: #a3622a; }
.view-tools { position: absolute; top: 7px; left: 50%; display: flex; transform: translateX(-50%); border: 1px solid #c5c9cd; padding: 0 4px; background: #eeeff1; }
.view-tools button { width: 27px; height: 26px; border-right: 1px solid #c5c9cd; background: #fff; }
.view-tools button:first-child { width: 28px; border-left: 1px solid #c5c9cd; }

.status { display: flex; align-items: flex-start; flex: none; height: 38px; border-top: 2px solid #979797; padding-left: 6px; background: #eeeff1; }
.sq { width: 22px; height: 22px; margin: 10px 4px 0 0; border: 1px solid #c5c9cd; background: #f6f6f7; }
.sq.pressed { border-color: #999 #ccc #ccc #999; background: #e0e1e4; }
.status p { flex: 1; display: flex; align-items: center; height: 22px; margin: 10px 0 0 5px; padding: 0 0 11px 1px; border-left: 2px solid #d8dadc; }
.cell { display: flex; align-items: center; height: 30px; margin-top: 2px; padding: 0 3px 0 2px; border-left: 1px solid #d0d2d5; min-width: 36px; }
.lights { width: 32px; min-width: 32px; justify-content: space-between; }
.lights i { width: 6px; height: 6px; border-radius: 50%; background: #c8c8c8; }
.lights .lit { width: 10px; height: 10px; background: #ff0; }
.wide { width: 40px; height: 28px; border: 1px solid #bfc2c6; border-radius: 2px; background: linear-gradient(#fff, #eeeff1); }
.filter { position: relative; width: 178px; margin: 6px 18px 0 94px; }
.filter select { display: block; width: 100%; height: 23px; padding: 0 5px; border: 1px solid #c5c9cd; border-radius: 0; background: linear-gradient(90deg, #c5c9cd, #c5c9cd) right 13px top / 1px 100% no-repeat, linear-gradient(#fff, #f1f2f3); appearance: none; font: inherit; color: inherit; }
.filter .caret { position: absolute; right: 4px; top: 10px; }

.taskbar { display: flex; flex: none; height: 48px; border-top: 1px solid #151010; box-shadow: inset 0 1px 0 #93857e; background: linear-gradient(80deg, #382422 0, #54342c 9%, #40231e 16%, #55291f 23%, #4d281e 31%, #5a4450 40%, #5a4450 46%, #7e6048 49%, #836347 52%, #62382a 55%, #735240 58%, #55454f 60%, #4e4251 64%, #5d5060 67%, #554c64 71%, #9a6a48 73%, #84583c 74%, #8d7450 77%, #84583c 79%, #664656 81%, #4e3438 85%, #432c2d 92%, #3e292b 100%); }
.start { width: 66px; margin-right: 3px; }
.slot { width: 70px; padding: 0 2px; }
.app { width: 66px; height: 47px; }
.app svg { margin-top: 2px; }
.run { border: 1px solid #c9beb8; border-radius: 3px; background: linear-gradient(160deg, rgba(255, 255, 255, .55), rgba(255, 255, 255, .15) 55%, rgba(255, 255, 255, .22)); }
.run.act { width: 58px; background: linear-gradient(160deg, rgba(255, 255, 255, .8), rgba(255, 255, 255, .5)); box-shadow: 3px 0 0 #8a7468, 4px 0 0 #c9beb8, 7px 0 0 #8a7468, 8px 0 0 #c9beb8; }
.tray { display: flex; align-items: center; margin-left: auto; padding-right: 1px; color: #fff; font: 14px/22px "Noto Sans", sans-serif; }
.lang { margin: 0 25px 4px 0; color: #d3c8c6; }
.up { border: solid transparent; border-width: 0 5px 5px; border-bottom-color: #fff; margin-right: 19px; }
.tray svg { margin-right: 11px; }
time { display: flex; flex-direction: column; align-items: center; width: 100px; padding-top: 2px; }
.peek { width: 13px; height: 46px; margin-left: 2px; border: 1px solid #a3938e; background: linear-gradient(#8a7873, #382426); }
</style>
